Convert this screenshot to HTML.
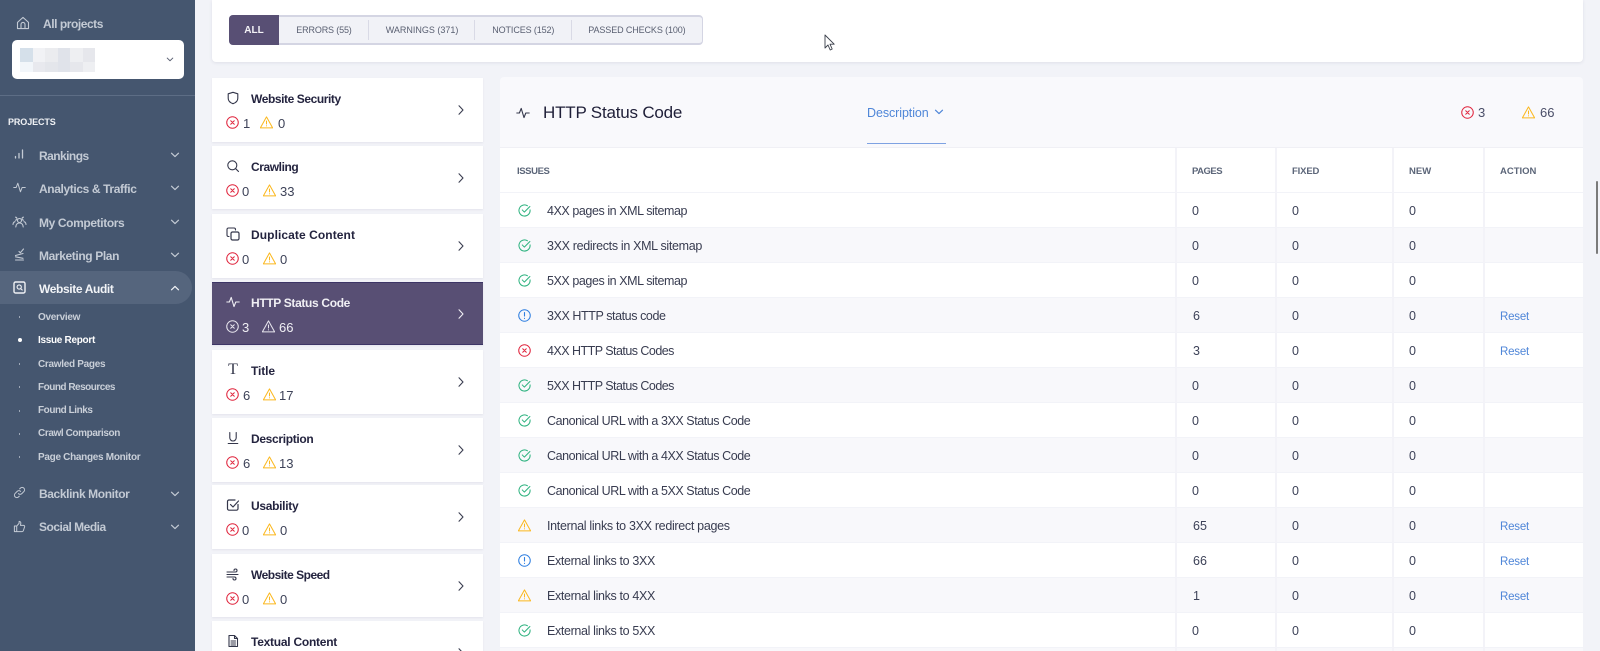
<!DOCTYPE html>
<html><head><meta charset="utf-8"><title>Issue Report</title>
<style>
html,body{margin:0;padding:0;width:1600px;height:651px;overflow:hidden}
#root{position:relative;width:1600px;height:651px;overflow:hidden;background:#f2f3f8;font-family:"Liberation Sans",sans-serif;color:#2f2f48}
#root div,#root span,#root svg{position:absolute;white-space:nowrap}
svg{overflow:visible;fill:none;stroke-linecap:round;stroke-linejoin:round}
#side{left:0;top:0;width:195px;height:651px;background:#45566f}
.nav{left:39px;font-size:12px;font-weight:bold;color:#c3cad4;line-height:16px;letter-spacing:-.38px}
.sub{left:38px;font-size:10px;font-weight:bold;color:#c9cfd8;line-height:14px;letter-spacing:-.3px}
.dot{left:18.5px;width:1.5px;height:1.5px;background:#aab3c0;border-radius:50%}
.ni{stroke:#c3cad4;stroke-width:1.1}
.card{left:212px;width:271px;height:64px;background:#fff;box-shadow:0 1px 2px rgba(60,60,100,.08)}
.ct{left:39px;top:13px;font-size:12px;line-height:16px;font-weight:bold;color:#24243f}
.cn{top:38px;font-size:13px;line-height:16px;color:#3d4258}
.tab{top:1px;font-size:9px;line-height:28px;color:#5a6072}
.row{left:500px;width:1083px;height:34px;background:#fff}
.g{background:#f8f8fb}
.t{left:47px;top:10px;font-size:12.5px;line-height:16px;color:#383c50}
.n{top:10px;font-size:12.5px;line-height:16px;color:#3d4258}
.a{left:692px}.b{left:792px}.c{left:909px}
.r{left:1000px;top:11px;font-size:11.5px;line-height:16px;color:#4f86d8;letter-spacing:-.2px}
.sep{top:148px;width:2px;height:503px;background:#f3f3f8}
.th{top:166px;font-size:9.5px;line-height:12px;font-weight:bold;color:#5c6679}
.ri{left:17.5px;top:10.5px}
</style></head>
<body>
<div id="root">
<svg width="0" height="0" style="left:0;top:0">
<defs>
<symbol id="err" viewBox="0 0 14 14"><circle cx="7" cy="7" r="6.2" stroke="#e0263e" stroke-width="1.1"/><path d="M5.1 5.100l3.800 3.800M8.900 5.100l-3.800 3.800" stroke="#e0263e" stroke-width="1.1"/></symbol>
<symbol id="errw" viewBox="0 0 14 14"><circle cx="7" cy="7" r="6.2" stroke="#e8e6ee" stroke-width="1.1"/><path d="M5.1 5.100l3.800 3.800M8.900 5.100l-3.800 3.800" stroke="#e8e6ee" stroke-width="1.1"/></symbol>
<symbol id="warn" viewBox="0 0 14 14"><path d="M7 1L13.600 12.800H.4Z" stroke="#fbb81f" stroke-width="1.1"/><path d="M7 5.400v3.200M7 10.500v.2" stroke="#fbb81f" stroke-width="1.1"/></symbol>
<symbol id="warnw" viewBox="0 0 14 14"><path d="M7 1L13.600 12.800H.4Z" stroke="#e8e6ee" stroke-width="1.1"/><path d="M7 5.400v3.200M7 10.500v.2" stroke="#e8e6ee" stroke-width="1.1"/></symbol>
<symbol id="ok" viewBox="0 0 14 14"><path d="M13 6.400a6 6 0 1 1-2.800-4.500" stroke="#2fb380" stroke-width="1.1"/><path d="M4.600 6.400l2.200 2.300 6-6" stroke="#2fb380" stroke-width="1.1"/></symbol>
<symbol id="info" viewBox="0 0 14 14"><circle cx="7" cy="7" r="6.200" stroke="#2f7fe0" stroke-width="1.1"/><path d="M7 3.800v3.800M7 10v.2" stroke="#2f7fe0" stroke-width="1.2"/></symbol>
<symbol id="pulse" viewBox="0 0 14 14"><path d="M.8 7h2.600L5.200 2.400 8 11.600l1.800-4.600h3.400" stroke="currentColor" stroke-width="1.1"/></symbol>
<symbol id="dn" viewBox="0 0 10 6"><path d="M1.500 1.200L5 4.600l3.500-3.400" stroke="currentColor" stroke-width="1.2"/></symbol>
<symbol id="rt" viewBox="0 0 6 10"><path d="M1 .8L5 5 1 9.200" stroke="currentColor" stroke-width="1.1"/></symbol>
</defs></svg>

<div id="side">
<svg style="left:16px;top:16px" width="14" height="14" viewBox="0 0 14 14"><path d="M1.500 6.400L7 1.400l5.500 5v6.200h-11zM5 12.600V8.400a2 2 0 0 1 4 0v4.200" class="ni"/></svg>
<div style="left:43px;top:16px;font-size:12px;line-height:16px;font-weight:bold;color:#c3cad4;letter-spacing:-.45px">All projects</div>
<div style="left:12px;top:40px;width:172px;height:39px;background:#fff;border-radius:5px"></div>
<div style="left:20px;top:48px;width:12.5px;height:13.5px;background:#d5e0ea"></div><div style="left:32.5px;top:48px;width:12.5px;height:13.5px;background:#f1f2f5"></div><div style="left:45px;top:48px;width:12.5px;height:13.5px;background:#ebecef"></div><div style="left:57.5px;top:48px;width:12.5px;height:13.5px;background:#e0e3ea"></div><div style="left:70px;top:48px;width:12.5px;height:13.5px;background:#eeeff2"></div><div style="left:82.5px;top:48px;width:12.5px;height:13.5px;background:#e6e7ec"></div>
<div style="left:20px;top:61.5px;width:12.5px;height:10.5px;background:#f2f6fa"></div><div style="left:32.5px;top:61.5px;width:12.5px;height:10.5px;background:#e8e9ee"></div><div style="left:45px;top:61.5px;width:12.5px;height:10.5px;background:#e4e6eb"></div><div style="left:57.5px;top:61.5px;width:12.5px;height:10.5px;background:#e0e3ea"></div><div style="left:70px;top:61.5px;width:12.5px;height:10.5px;background:#e6e7ec"></div><div style="left:82.5px;top:61.5px;width:12.5px;height:10.5px;background:#eeeff2"></div>
<svg style="left:166px;top:57px;color:#5a6072" width="8" height="5"><use href="#dn" width="8" height="5"/></svg>
<div style="left:0;top:95px;width:195px;height:1px;background:#5d6d85"></div>
<div style="left:8px;top:115.5px;font-size:9px;line-height:12px;font-weight:bold;color:#f0f2f5;letter-spacing:-.1px">PROJECTS</div>

<svg style="left:14px;top:148px" width="11" height="11" viewBox="0 0 11 11"><path d="M1.500 10V8.500M5 10V5.500M8.500 10V2" stroke="#c3cad4" stroke-width="1.300"/></svg>
<div class="nav" style="top:148px;letter-spacing:-.55px">Rankings</div>
<svg style="left:170px;top:152px;color:#c3cad4" width="10" height="6"><use href="#dn" width="10" height="6"/></svg>

<svg style="left:13px;top:181px;color:#c3cad4" width="13" height="13"><use href="#pulse" width="13" height="13"/></svg>
<div class="nav" style="top:181px">Analytics &amp; Traffic</div>
<svg style="left:170px;top:185px;color:#c3cad4" width="10" height="6"><use href="#dn" width="10" height="6"/></svg>

<svg style="left:12px;top:215px" width="15" height="14" viewBox="0 0 15 14"><circle cx="7.500" cy="5.500" r="2" class="ni"/><path d="M3.800 12c.2-2.800 1.600-4 3.700-4s3.500 1.200 3.700 4M3.500 2.200a1.500 1.500 0 1 1-.1 3M11.500 2.200a1.500 1.500 0 1 0 .1 3M1 9.500c.1-1.500.8-2.500 2-2.800M14 9.500c-.1-1.500-.8-2.500-2-2.800" class="ni"/></svg>
<div class="nav" style="top:215px">My Competitors</div>
<svg style="left:170px;top:219px;color:#c3cad4" width="10" height="6"><use href="#dn" width="10" height="6"/></svg>

<svg style="left:14px;top:248px" width="12" height="13" viewBox="0 0 12 13"><path d="M5 3.500l1.300 1.300L9.500 1M1.500 7.500L9 5.500M1.500 8.800l7.500 1.500M1.500 12h8" class="ni"/></svg>
<div class="nav" style="top:248px">Marketing Plan</div>
<svg style="left:170px;top:252px;color:#c3cad4" width="10" height="6"><use href="#dn" width="10" height="6"/></svg>

<div style="left:0;top:271px;width:192px;height:33px;background:#55657d;border-radius:0 17px 17px 0"></div>
<svg style="left:13px;top:281px" width="13" height="13" viewBox="0 0 13 13"><rect x="1" y="1" width="11" height="11" rx="1.500" stroke="#f0f2f5" stroke-width="1.400"/><circle cx="6.200" cy="6" r="2.100" stroke="#f0f2f5" stroke-width="1.100"/><path d="M7.800 7.600l1.400 1.400" stroke="#f0f2f5" stroke-width="1.100"/></svg>
<div class="nav" style="top:281px;color:#f2f4f7;letter-spacing:-.37px">Website Audit</div>
<svg style="left:170px;top:285px;color:#f2f4f7;transform:scaleY(-1)" width="10" height="6"><use href="#dn" width="10" height="6"/></svg>

<div class="dot" style="top:316px"></div><div class="sub" style="top:311px">Overview</div>
<div class="dot" style="top:338px;left:17.500px;width:4px;height:4px;background:#fff"></div><div class="sub" style="top:333.500px;color:#fff">Issue Report</div>
<div class="dot" style="top:363px"></div><div class="sub" style="top:358px">Crawled Pages</div>
<div class="dot" style="top:386px"></div><div class="sub" style="top:381px;letter-spacing:-.5px">Found Resources</div>
<div class="dot" style="top:410px"></div><div class="sub" style="top:403.500px;letter-spacing:-.45px">Found Links</div>
<div class="dot" style="top:433px"></div><div class="sub" style="top:427px;letter-spacing:-.4px">Crawl Comparison</div>
<div class="dot" style="top:456px"></div><div class="sub" style="top:451px">Page Changes Monitor</div>

<svg style="left:13px;top:486px" width="13" height="13" viewBox="0 0 14 14"><path d="M5.800 8.200a2.600 2.600 0 0 0 3.700 0l2.200-2.200a2.600 2.600 0 0 0-3.700-3.700l-.8.800M8.200 5.800a2.600 2.600 0 0 0-3.700 0L2.300 8a2.600 2.600 0 0 0 3.700 3.700l.8-.8" class="ni"/></svg>
<div class="nav" style="top:486px;letter-spacing:-.39px">Backlink Monitor</div>
<svg style="left:170px;top:490.500px;color:#c3cad4" width="10" height="6"><use href="#dn" width="10" height="6"/></svg>

<svg style="left:13px;top:519.500px" width="13" height="13" viewBox="0 0 14 14"><path d="M4 6.500H1.500v6H4zM4 6.500l2.600-3V1.500c1.400 0 2 1 1.800 2.200L8 5.800h3.400c.9 0 1.400.8 1.100 1.600l-1.400 4.200c-.2.600-.7.900-1.300.9H4" class="ni"/></svg>
<div class="nav" style="top:519px;letter-spacing:-.5px">Social Media</div>
<svg style="left:170px;top:523.500px;color:#c3cad4" width="10" height="6"><use href="#dn" width="10" height="6"/></svg>
</div>

<!-- top bar -->
<div style="left:212px;top:0;width:1371px;height:62px;background:#fff;border-radius:0 0 4px 4px;box-shadow:0 1px 3px rgba(60,60,100,.1)"></div>
<div style="left:229px;top:15px;width:472px;height:26px;background:#f1f2f7;border:1px solid #d4d5e3;border-bottom-width:2px;border-top-width:2px;border-radius:4px"></div>
<div style="left:229px;top:15px;width:50px;height:30px;background:#584f74;border-radius:4px 0 0 4px;color:#f4f3f7;font-size:10px;font-weight:bold;line-height:31px;text-align:center">ALL</div>
<div style="left:229px;top:15px;width:473px;height:30px">
<div class="tab" style="left:67.3px;letter-spacing:-.15px">ERRORS (55)</div>
<div style="left:139px;top:5px;width:1px;height:20px;background:#d9dae6"></div>
<div class="tab" style="left:156.700px">WARNINGS (371)</div>
<div style="left:245px;top:5px;width:1px;height:20px;background:#d9dae6"></div>
<div class="tab" style="left:263.300px;letter-spacing:-.12px">NOTICES (152)</div>
<div style="left:342px;top:5px;width:1px;height:20px;background:#d9dae6"></div>
<div class="tab" style="left:359.300px;letter-spacing:-.11px">PASSED CHECKS (100)</div>
</div>
<svg style="left:824px;top:34px" width="12" height="17" viewBox="0 0 12 17"><path d="M1 1v13l3-3 2.200 5 2-1-2.200-4.800h4.200z" fill="#fff" stroke="#3a3f4a" stroke-width=".9"/></svg>

<!-- cards -->
<div class="card" style="top:78px">
<svg style="left:14px;top:13px" width="14" height="14" viewBox="0 0 14 14"><path d="M7 1.300l4.800 1.500v4.400c0 2.700-2 4.500-4.800 5.500-2.800-1-4.800-2.800-4.800-5.500V2.800z" stroke="#33364a" stroke-width="1.100"/></svg>
<div class="ct" style="letter-spacing:-.42px">Website Security</div>
<svg style="left:14px;top:38px" width="13" height="13"><use href="#err" width="13" height="13"/></svg><div class="cn" style="left:31px">1</div>
<svg style="left:48px;top:38px" width="13" height="13"><use href="#warn" width="13" height="13"/></svg><div class="cn" style="left:66px">0</div>
<svg style="left:246px;top:27px;color:#3a3d50" width="6" height="10"><use href="#rt" width="6" height="10"/></svg>
</div>
<div class="card" style="top:146px;height:63px">
<svg style="left:14px;top:13px" width="14" height="14" viewBox="0 0 14 14"><circle cx="6.300" cy="6.300" r="4.500" stroke="#33364a" stroke-width="1.100"/><path d="M9.700 9.700l2.800 2.800" stroke="#33364a" stroke-width="1.100"/></svg>
<div class="ct" style="letter-spacing:-.42px">Crawling</div>
<svg style="left:14px;top:38px" width="13" height="13"><use href="#err" width="13" height="13"/></svg><div class="cn" style="left:30px">0</div>
<svg style="left:51px;top:38px" width="13" height="13"><use href="#warn" width="13" height="13"/></svg><div class="cn" style="left:68px">33</div>
<svg style="left:246px;top:27px;color:#3a3d50" width="6" height="10"><use href="#rt" width="6" height="10"/></svg>
</div>
<div class="card" style="top:214px">
<svg style="left:14px;top:13px" width="14" height="14" viewBox="0 0 14 14"><rect x="5" y="5" width="8" height="8" rx="1.500" stroke="#33364a" stroke-width="1.200"/><path d="M3 9.500H2.500A1.500 1.500 0 0 1 1 8V2.500A1.500 1.500 0 0 1 2.500 1H8a1.500 1.500 0 0 1 1.500 1.500V3" stroke="#33364a" stroke-width="1.100"/></svg>
<div class="ct" style="letter-spacing:.08px">Duplicate Content</div>
<svg style="left:14px;top:38px" width="13" height="13"><use href="#err" width="13" height="13"/></svg><div class="cn" style="left:30px">0</div>
<svg style="left:51px;top:38px" width="13" height="13"><use href="#warn" width="13" height="13"/></svg><div class="cn" style="left:68px">0</div>
<svg style="left:246px;top:27px;color:#3a3d50" width="6" height="10"><use href="#rt" width="6" height="10"/></svg>
</div>
<div class="card" style="top:282px;background:#584f74;border-top:1px solid #3d3566;border-bottom:1px solid #3d3566;box-sizing:border-box;height:63px">
<svg style="left:14px;top:12px;color:#f0eff4" width="14" height="14"><use href="#pulse" width="14" height="14"/></svg>
<div class="ct" style="top:12px;color:#f0eff4;letter-spacing:-.34px">HTTP Status Code</div>
<svg style="left:14px;top:37px" width="13" height="13"><use href="#errw" width="13" height="13"/></svg><div class="cn" style="left:30px;top:37px;color:#f0eff4">3</div>
<svg style="left:50px;top:37px" width="13" height="13"><use href="#warnw" width="13" height="13"/></svg><div class="cn" style="left:67px;top:37px;color:#f0eff4">66</div>
<svg style="left:246px;top:26px;color:#f0eff4" width="6" height="10"><use href="#rt" width="6" height="10"/></svg>
</div>
<div class="card" style="top:350px">
<div style="left:14px;top:11px;font:16px/18px 'Liberation Serif',serif;color:#33364a;width:14px;text-align:center">T</div>
<div class="ct" style="letter-spacing:-.1px">Title</div>
<svg style="left:14px;top:38px" width="13" height="13"><use href="#err" width="13" height="13"/></svg><div class="cn" style="left:31px">6</div>
<svg style="left:51px;top:38px" width="13" height="13"><use href="#warn" width="13" height="13"/></svg><div class="cn" style="left:67px">17</div>
<svg style="left:246px;top:27px;color:#3a3d50" width="6" height="10"><use href="#rt" width="6" height="10"/></svg>
</div>
<div class="card" style="top:418px">
<svg style="left:14px;top:13px" width="14" height="14" viewBox="0 0 14 14"><path d="M3.800 1.500v5.300a3.200 3.200 0 0 0 6.400 0V1.500M2.200 12.500h9.600" stroke="#33364a" stroke-width="1.100"/></svg>
<div class="ct" style="letter-spacing:-.33px">Description</div>
<svg style="left:14px;top:38px" width="13" height="13"><use href="#err" width="13" height="13"/></svg><div class="cn" style="left:31px">6</div>
<svg style="left:51px;top:38px" width="13" height="13"><use href="#warn" width="13" height="13"/></svg><div class="cn" style="left:67px">13</div>
<svg style="left:246px;top:27px;color:#3a3d50" width="6" height="10"><use href="#rt" width="6" height="10"/></svg>
</div>
<div class="card" style="top:485px;height:63.500px">
<svg style="left:14px;top:13px" width="14" height="14" viewBox="0 0 14 14"><path d="M12 6.500v4.200a1.500 1.500 0 0 1-1.500 1.500H3A1.500 1.500 0 0 1 1.500 10.700V3.500A1.500 1.500 0 0 1 3 2h6" stroke="#33364a" stroke-width="1.200"/><path d="M4.500 6.500L7 9l5.500-6" stroke="#33364a" stroke-width="1.200"/></svg>
<div class="ct" style="letter-spacing:-.3px">Usability</div>
<svg style="left:14px;top:38px" width="13" height="13"><use href="#err" width="13" height="13"/></svg><div class="cn" style="left:30px">0</div>
<svg style="left:51px;top:38px" width="13" height="13"><use href="#warn" width="13" height="13"/></svg><div class="cn" style="left:68px">0</div>
<svg style="left:246px;top:27px;color:#3a3d50" width="6" height="10"><use href="#rt" width="6" height="10"/></svg>
</div>
<div class="card" style="top:554px;height:63px">
<svg style="left:14px;top:13px" width="14" height="14" viewBox="0 0 14 14"><path d="M1 5h8.500a1.500 1.500 0 1 0-1.500-1.500M1 7.500h11M1 10h7.500a1.500 1.500 0 1 1-1.500 1.500" stroke="#33364a" stroke-width="1.100"/></svg>
<div class="ct" style="letter-spacing:-.5px">Website Speed</div>
<svg style="left:14px;top:38px" width="13" height="13"><use href="#err" width="13" height="13"/></svg><div class="cn" style="left:30px">0</div>
<svg style="left:51px;top:38px" width="13" height="13"><use href="#warn" width="13" height="13"/></svg><div class="cn" style="left:68px">0</div>
<svg style="left:246px;top:27px;color:#3a3d50" width="6" height="10"><use href="#rt" width="6" height="10"/></svg>
</div>
<div class="card" style="top:621px;height:30px;overflow:hidden">
<svg style="left:14px;top:13px" width="14" height="14" viewBox="0 0 14 14"><path d="M3 1.500h5.500l3 3v8H3zM8.500 1.500v3h3M5 7h4.500M5 9h4.500M5 11h4.500" stroke="#33364a" stroke-width="1.100"/></svg>
<div class="ct" style="letter-spacing:-.25px">Textual Content</div>
<svg style="left:246px;top:27px;color:#3a3d50;overflow:hidden" width="6" height="3" viewBox="0 0 6 3"><use href="#rt" width="6" height="10"/></svg>
</div>

<!-- main panel -->
<div style="left:500px;top:77px;width:1083px;height:71px;background:#f9f9fc;border-radius:4px 4px 0 0;border-bottom:1px solid #f0f0f5;box-sizing:border-box"></div>
<svg style="left:516px;top:106px;color:#33364a" width="14" height="14"><use href="#pulse" width="14" height="14"/></svg>
<div style="left:543px;top:102px;font-size:17px;line-height:22px;color:#1f1f38;letter-spacing:-.2px">HTTP Status Code</div>
<div style="left:867px;top:105px;font-size:12.5px;line-height:16px;color:#4f86d8;letter-spacing:-.08px">Description</div>
<svg style="left:934px;top:109px;color:#4f86d8" width="10" height="6"><use href="#dn" width="10" height="6"/></svg>
<div style="left:867px;top:143px;width:79px;height:1px;background:#7ea2e2"></div>
<svg style="left:1461px;top:105.500px" width="13" height="13"><use href="#err" width="13" height="13"/></svg>
<div style="left:1478px;top:105px;font-size:13px;line-height:16px;color:#4a4e68">3</div>
<svg style="left:1522px;top:105.500px" width="13" height="13"><use href="#warn" width="13" height="13"/></svg>
<div style="left:1540px;top:105px;font-size:13px;line-height:16px;color:#4a4e68">66</div>

<div style="left:500px;top:148px;width:1083px;height:44px;background:#fff"></div>
<div class="th" style="left:517px;letter-spacing:-.4px">ISSUES</div>
<div class="th" style="left:1192px;letter-spacing:-.5px">PAGES</div>
<div class="th" style="left:1292px;letter-spacing:-.15px">FIXED</div>
<div class="th" style="left:1409px">NEW</div>
<div class="th" style="left:1500px">ACTION</div>

<div class="row" style="top:193px"><svg class="ri" width="13" height="13"><use href="#ok" width="13" height="13"/></svg><div class="t" style="letter-spacing:-.43px">4XX pages in XML sitemap</div><div class="n a">0</div><div class="n b">0</div><div class="n c">0</div></div>
<div class="row g" style="top:228px"><svg class="ri" width="13" height="13"><use href="#ok" width="13" height="13"/></svg><div class="t" style="letter-spacing:-.33px">3XX redirects in XML sitemap</div><div class="n a">0</div><div class="n b">0</div><div class="n c">0</div></div>
<div class="row" style="top:263px"><svg class="ri" width="13" height="13"><use href="#ok" width="13" height="13"/></svg><div class="t" style="letter-spacing:-.43px">5XX pages in XML sitemap</div><div class="n a">0</div><div class="n b">0</div><div class="n c">0</div></div>
<div class="row g" style="top:298px"><svg class="ri" width="13" height="13"><use href="#info" width="13" height="13"/></svg><div class="t" style="letter-spacing:-.42px">3XX HTTP status code</div><div class="n a" style="left:693px">6</div><div class="n b">0</div><div class="n c">0</div><div class="r">Reset</div></div>
<div class="row" style="top:333px"><svg class="ri" width="13" height="13"><use href="#err" width="13" height="13"/></svg><div class="t" style="letter-spacing:-.53px">4XX HTTP Status Codes</div><div class="n a" style="left:693px">3</div><div class="n b">0</div><div class="n c">0</div><div class="r">Reset</div></div>
<div class="row g" style="top:368px"><svg class="ri" width="13" height="13"><use href="#ok" width="13" height="13"/></svg><div class="t" style="letter-spacing:-.53px">5XX HTTP Status Codes</div><div class="n a">0</div><div class="n b">0</div><div class="n c">0</div></div>
<div class="row" style="top:403px"><svg class="ri" width="13" height="13"><use href="#ok" width="13" height="13"/></svg><div class="t" style="letter-spacing:-.44px">Canonical URL with a 3XX Status Code</div><div class="n a">0</div><div class="n b">0</div><div class="n c">0</div></div>
<div class="row g" style="top:438px"><svg class="ri" width="13" height="13"><use href="#ok" width="13" height="13"/></svg><div class="t" style="letter-spacing:-.44px">Canonical URL with a 4XX Status Code</div><div class="n a">0</div><div class="n b">0</div><div class="n c">0</div></div>
<div class="row" style="top:473px"><svg class="ri" width="13" height="13"><use href="#ok" width="13" height="13"/></svg><div class="t" style="letter-spacing:-.44px">Canonical URL with a 5XX Status Code</div><div class="n a">0</div><div class="n b">0</div><div class="n c">0</div></div>
<div class="row g" style="top:508px"><svg class="ri" width="13" height="13"><use href="#warn" width="13" height="13"/></svg><div class="t" style="letter-spacing:-.31px">Internal links to 3XX redirect pages</div><div class="n a" style="left:693px">65</div><div class="n b">0</div><div class="n c">0</div><div class="r">Reset</div></div>
<div class="row" style="top:543px"><svg class="ri" width="13" height="13"><use href="#info" width="13" height="13"/></svg><div class="t" style="letter-spacing:-.35px">External links to 3XX</div><div class="n a" style="left:693px">66</div><div class="n b">0</div><div class="n c">0</div><div class="r">Reset</div></div>
<div class="row g" style="top:578px"><svg class="ri" width="13" height="13"><use href="#warn" width="13" height="13"/></svg><div class="t" style="letter-spacing:-.35px">External links to 4XX</div><div class="n a" style="left:693px">1</div><div class="n b">0</div><div class="n c">0</div><div class="r">Reset</div></div>
<div class="row" style="top:613px;"><svg class="ri" width="13" height="13"><use href="#ok" width="13" height="13"/></svg><div class="t" style="letter-spacing:-.35px">External links to 5XX</div><div class="n a">0</div><div class="n b">0</div><div class="n c">0</div></div>
<div class="row g" style="top:648px;height:3px"></div>

<div class="sep" style="left:1175px"></div>
<div class="sep" style="left:1275px"></div>
<div class="sep" style="left:1392px"></div>
<div class="sep" style="left:1483px"></div>

<div style="left:1596px;top:181px;width:2px;height:73px;background:#7a7a7a;border-radius:1px"></div>
</div>
</body></html>
